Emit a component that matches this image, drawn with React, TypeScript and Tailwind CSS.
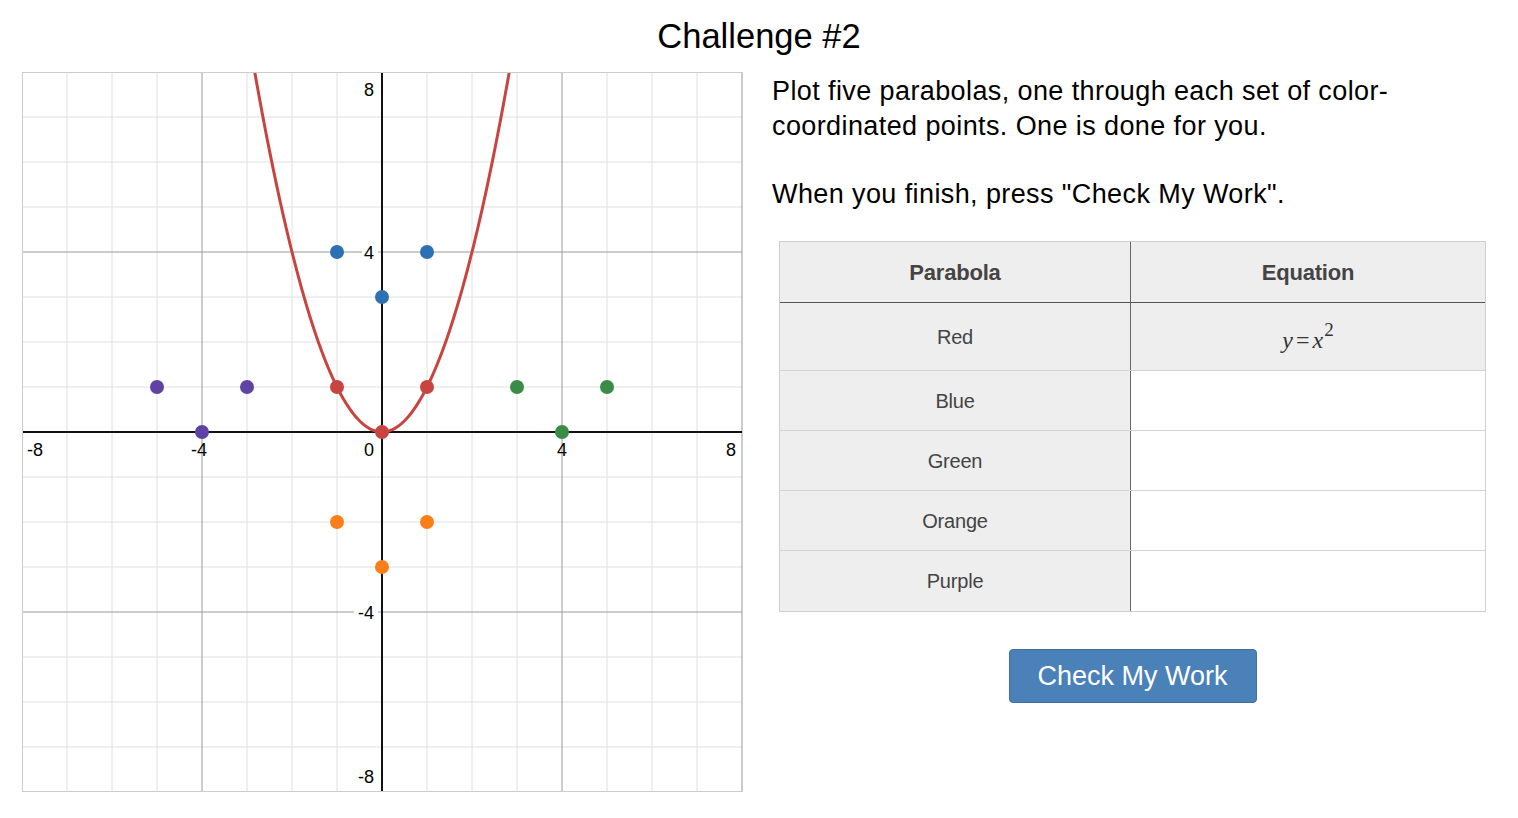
import React from 'react'

const U = 45
const O = 359

const toX = (x: number) => O + x * U
const toY = (y: number) => O - y * U

type Dot = { x: number; y: number; c: string }

const DOTS: Dot[] = [
  { x: -1, y: 4, c: '#2d70b3' },
  { x: 1, y: 4, c: '#2d70b3' },
  { x: 0, y: 3, c: '#2d70b3' },
  { x: -5, y: 1, c: '#6042a6' },
  { x: -3, y: 1, c: '#6042a6' },
  { x: -4, y: 0, c: '#6042a6' },
  { x: 3, y: 1, c: '#388c46' },
  { x: 5, y: 1, c: '#388c46' },
  { x: 4, y: 0, c: '#388c46' },
  { x: -1, y: -2, c: '#fa7e19' },
  { x: 1, y: -2, c: '#fa7e19' },
  { x: 0, y: -3, c: '#fa7e19' },
  { x: -1, y: 1, c: '#c74440' },
  { x: 1, y: 1, c: '#c74440' },
  { x: 0, y: 0, c: '#c74440' },
]

function parabola() {
  const pts: string[] = []
  const lim = Math.sqrt(8.1)
  for (let i = 0; i <= 200; i++) {
    const x = -lim + (2 * lim * i) / 200
    pts.push(`${toX(x).toFixed(2)},${toY(x * x).toFixed(2)}`)
  }
  return pts.join(' ')
}

function Graph() {
  const minor = Array.from({ length: 17 }, (_, i) => i - 8).filter((v) => v % 4 !== 0)
  const major = [-8, -4, 4, 8]
  const label = { fontFamily: '"Liberation Sans", Arial, sans-serif', fontSize: 18, fill: '#000' }

  return (
    <div className="w-[721px] h-[720px] border border-[#cccccc] bg-white shrink-0 overflow-hidden">
      <svg width="720" height="720" viewBox="0 0 720 720">
        {minor.map((v) => (
          <g key={`m${v}`}>
            <line x1={toX(v)} y1={0} x2={toX(v)} y2={720} stroke="#e0e0e0" strokeWidth="1" />
            <line x1={0} y1={toY(v)} x2={720} y2={toY(v)} stroke="#e0e0e0" strokeWidth="1" />
          </g>
        ))}
        {major.map((v) => (
          <g key={`M${v}`}>
            <line x1={toX(v)} y1={0} x2={toX(v)} y2={720} stroke="#999" strokeWidth="1" />
            <line x1={0} y1={toY(v)} x2={720} y2={toY(v)} stroke="#999" strokeWidth="1" />
          </g>
        ))}
        <line x1={O} y1={0} x2={O} y2={720} stroke="#111" strokeWidth="2" />
        <line x1={0} y1={O} x2={720} y2={O} stroke="#111" strokeWidth="2" />

        {/* axis labels */}
        <rect x={toX(0) - 20} y={toY(4) - 10} width={16} height={20} fill="#fff" />
        <rect x={toX(0) - 28} y={toY(-4) - 10} width={24} height={20} fill="#fff" />
        <text x={toX(0) - 8} y={23} textAnchor="end" style={label}>8</text>
        <text x={toX(0) - 8} y={toY(4) + 7} textAnchor="end" style={label}>4</text>
        <text x={toX(0) - 8} y={toY(-4) + 7} textAnchor="end" style={label}>-4</text>
        <text x={toX(0) - 8} y={toY(-8) - 9} textAnchor="end" style={label}>-8</text>
        <text x={toX(0) - 8} y={O + 24} textAnchor="end" style={label}>0</text>
        <text x={toX(-8) + 5} y={O + 24} style={label}>-8</text>
        <text x={toX(-4) - 3} y={O + 24} textAnchor="middle" style={label}>-4</text>
        <text x={toX(4)} y={O + 24} textAnchor="middle" style={label}>4</text>
        <text x={toX(8) - 6} y={O + 24} textAnchor="end" style={label}>8</text>

        <polyline points={parabola()} fill="none" stroke="#c74440" strokeWidth="3" />

        {DOTS.map((d, i) => (
          <circle key={i} cx={toX(d.x)} cy={toY(d.y)} r="7" fill={d.c} />
        ))}
      </svg>
    </div>
  )
}

const ROWS = ['Blue', 'Green', 'Orange', 'Purple']

function EquationTable() {
  return (
    <div className="ml-[7px] w-[707px] border border-[#cfcfcf] text-[#444]">
      <div className="flex h-[61px] bg-[#eeeeee] border-b border-[#555]">
        <div className="w-[351px] border-r border-[#666] flex items-center justify-center text-[22px] font-bold tracking-[-0.2px]">
          Parabola
        </div>
        <div className="flex-1 flex items-center justify-center text-[22px] font-bold tracking-[-0.2px]">Equation</div>
      </div>
      <div className="flex h-[68px] bg-[#eeeeee] border-b border-[#d4d4d4]">
        <div className="w-[351px] border-r border-[#666] flex items-center justify-center text-[20px] tracking-[-0.2px]">
          Red
        </div>
        <div className="flex-1 flex items-center justify-center pt-[6px]">
          <span className="text-[24px] text-[#333]" style={{ fontFamily: '"Liberation Serif", "Times New Roman", serif' }}>
            <i>y</i>
            <span className="mx-[3px]">=</span>
            <i>x</i>
            <sup className="text-[19px] relative top-[-12px] ml-[1px]">2</sup>
          </span>
        </div>
      </div>
      {ROWS.map((r, i) => (
        <div key={r} className={`flex h-[60px] ${i < ROWS.length - 1 ? 'border-b border-[#d4d4d4]' : ''}`}>
          <div className="w-[351px] bg-[#eeeeee] border-r border-[#666] flex items-center justify-center text-[20px] tracking-[-0.2px]">
            {r}
          </div>
          <div className="flex-1 bg-white" />
        </div>
      ))}
    </div>
  )
}

export default function App() {
  return (
    <div className="w-[1518px] min-h-[818px] bg-white text-black" style={{ fontFamily: '"Liberation Sans", Arial, sans-serif' }}>
      <h1 className="pt-[15px] text-center text-[34.5px] leading-[42px] font-normal">Challenge #2</h1>
      <div className="flex pl-[22px] pt-[15px] gap-[29px]">
        <Graph />
        <div className="w-[720px] pt-[2px]">
          <p className="text-[27px] leading-[35px] tracking-[0.4px] w-[660px]">
            Plot five parabolas, one through each set of color-coordinated points. One is done for you.
          </p>
          <p className="text-[27px] leading-[35px] tracking-[0.4px] mt-[33px]">
            When you finish, press "Check My Work".
          </p>
          <div className="mt-[29px]">
            <EquationTable />
          </div>
          <div className="flex justify-center ml-[7px] w-[707px] mt-[37px]">
            <button className="w-[248px] h-[54px] rounded-[4px] bg-[#4a81b9] border border-[#3f72a8] text-white text-[27px]">
              Check My Work
            </button>
          </div>
        </div>
      </div>
    </div>
  )
}
